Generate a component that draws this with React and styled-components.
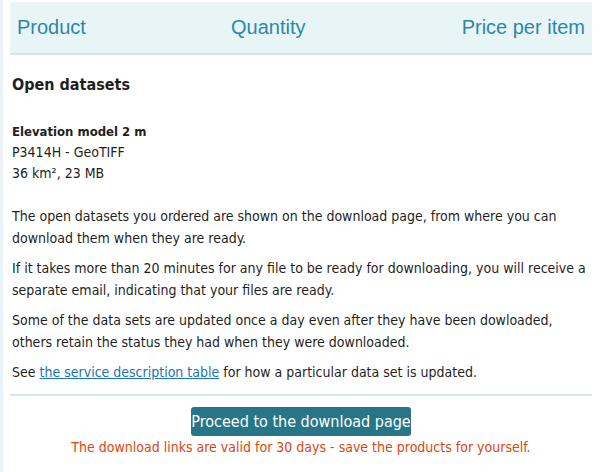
import styled, { createGlobalStyle } from "styled-components";

const GlobalStyle = createGlobalStyle`
  html, body {
    margin: 0;
    padding: 0;
    background: #ffffff;
  }
  body {
    font-family: "DejaVu Sans Condensed", "DejaVu Sans", sans-serif;
    color: #1f1f1f;
  }
`;

const Page = styled.div`
  width: 601px;
  height: 472px;
  overflow: hidden;
  display: flex;
  border-left: 3px solid #eaf4f6;
  box-sizing: border-box;
`;

const Main = styled.div`
  flex: 1;
  padding: 2px 9px 0 7px;
`;

const Header = styled.div`
  display: flex;
  align-items: center;
  height: 51px;
  background: #e8f5f6;
  border-bottom: 2px solid #d3e6ee;
  padding: 0 7px;
  font-family: "Liberation Sans", Arial, sans-serif;
  font-size: 20px;
  color: #2e87a6;
`;

const HeadCell = styled.div`
  width: ${(p) => (p.w ? `${p.w}px` : "auto")};
  flex: ${(p) => (p.w ? "none" : 1)};
  text-align: ${(p) => p.align || "left"};
`;

const Section = styled.div`
  padding: 0 2px;
`;

const Title = styled.h2`
  margin: 18px 0 0;
  font-size: 16px;
  font-weight: bold;
  line-height: 24px;
`;

const Item = styled.div`
  margin-top: 24px;
  font-size: 14px;
  line-height: 21px;
`;

const ItemName = styled.div`
  font-size: 13px;
  font-weight: bold;
`;

const Text = styled.p`
  margin: 0;
  font-size: 14px;
  line-height: 22px;
  & + & {
    margin-top: 8px;
  }
`;

const TextBlock = styled.div`
  margin-top: 21px;
`;

const Link = styled.a`
  color: #1b73b8;
  text-decoration: underline;
`;

const Divider = styled.div`
  height: 2px;
  background: #d6e9ef;
  margin-top: ${(p) => p.top || 0}px;
`;

const Actions = styled.div`
  display: flex;
  flex-direction: column;
  align-items: center;
  padding-top: 11px;
`;

const Button = styled.button`
  background: #277688;
  color: #ffffff;
  border: none;
  border-radius: 3px;
  height: 29px;
  padding: 0;
  font-family: "DejaVu Sans Condensed", "DejaVu Sans", sans-serif;
  font-size: 16px;
  line-height: 29px;
  cursor: pointer;
`;

const Notice = styled.div`
  margin-top: 1px;
  font-size: 14px;
  line-height: 20px;
  color: #d9480f;
`;

export default function App() {
  return (
    <>
      <GlobalStyle />
      <Page>
        <Main>
          <Header>
            <HeadCell w={214}>Product</HeadCell>
            <HeadCell w={120}>Quantity</HeadCell>
            <HeadCell align="right">Price per item</HeadCell>
          </Header>
          <Section>
            <Title>Open datasets</Title>
            <Item>
              <ItemName>Elevation model 2 m</ItemName>
              <div>P3414H - GeoTIFF</div>
              <div>36 km², 23 MB</div>
            </Item>
            <TextBlock>
              <Text>
                The open datasets you ordered are shown on the download page, from where you can
                download them when they are ready.
              </Text>
              <Text>
                If it takes more than 20 minutes for any file to be ready for downloading, you will receive a
                separate email, indicating that your files are ready.
              </Text>
              <Text>
                Some of the data sets are updated once a day even after they have been dowloaded,
                others retain the status they had when they were downloaded.
              </Text>
              <Text>
                See <Link href="#">the service description table</Link> for how a particular data set is updated.
              </Text>
            </TextBlock>
          </Section>
          <Divider top={11} />
          <Actions>
            <Button>Proceed to the download page</Button>
            <Notice>The download links are valid for 30 days - save the products for yourself.</Notice>
          </Actions>
          <Divider top={16} />
        </Main>
      </Page>
    </>
  );
}
